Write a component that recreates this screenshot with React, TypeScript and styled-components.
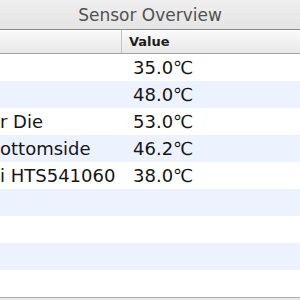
import React from "react";
import styled, { createGlobalStyle } from "styled-components";

const GlobalStyle = createGlobalStyle`
  html, body {
    margin: 0;
    padding: 0;
    background: #ffffff;
  }
  body {
    width: 300px;
    height: 300px;
    overflow: hidden;
    font-family: "DejaVu Sans", "Liberation Sans", sans-serif;
  }
`;

type Reading = { name: string; value: string };

const readings: Reading[] = [
  { name: "", value: "35.0℃" },
  { name: "", value: "48.0℃" },
  { name: "r Die", value: "53.0℃" },
  { name: "ottomside", value: "46.2℃" },
  { name: "i HTS541060", value: "38.0℃" },
  { name: "", value: "" },
  { name: "", value: "" },
  { name: "", value: "" },
  { name: "", value: "" },
];

export default function App() {
  return (
    <>
      <GlobalStyle />
      <Window>
        <TitleBar>Sensor Overview</TitleBar>
        <HeaderRow>
          <HeaderCell />
          <HeaderCell $last>Value</HeaderCell>
        </HeaderRow>
        <Body>
          {readings.map((r, i) => (
            <Row key={i} $alt={i % 2 === 1}>
              <NameCell>{r.name}</NameCell>
              <ValueCell>{r.value}</ValueCell>
            </Row>
          ))}
        </Body>
        <BottomEdge />
      </Window>
    </>
  );
}

const Window = styled.div`
  width: 300px;
  height: 300px;
  display: flex;
  flex-direction: column;
  background: #ffffff;
`;

const TitleBar = styled.div`
  height: 30px;
  flex: none;
  display: flex;
  align-items: center;
  justify-content: center;
  background: linear-gradient(#efefef, #e4e4e4);
  border-bottom: 1px solid #8e8e8e;
  color: #515151;
  font-size: 17px;
  padding-top: 1px;
  box-sizing: border-box;
`;

const HeaderRow = styled.div`
  height: 24px;
  flex: none;
  display: grid;
  grid-template-columns: 122px 1fr;
  background: linear-gradient(#fbfbfb, #f1f1f1 50%, #e8e8e8);
  border-bottom: 1px solid #a2a2a2;
  box-sizing: border-box;
`;

const HeaderCell = styled.div<{ $last?: boolean }>`
  display: flex;
  align-items: center;
  padding-left: 7px;
  font-size: 13px;
  font-weight: bold;
  color: #1e1e1e;
  border-right: ${(p) => (p.$last ? "none" : "1px solid #c4c4c4")};
`;

const Body = styled.div`
  display: flex;
  flex-direction: column;
`;

const Row = styled.div<{ $alt: boolean }>`
  height: 27px;
  display: grid;
  grid-template-columns: 123px 1fr;
  align-items: center;
  background: ${(p) => (p.$alt ? "#edf3fe" : "#ffffff")};
  font-size: 18px;
  color: #161616;
`;

const NameCell = styled.div`
  white-space: nowrap;
  overflow: hidden;
`;

const ValueCell = styled.div`
  padding-left: 10px;
  white-space: nowrap;
`;

const BottomEdge = styled.div`
  height: 2px;
  border-top: 1px solid #a9a9a9;
  background: #e9e9e9;
`;
